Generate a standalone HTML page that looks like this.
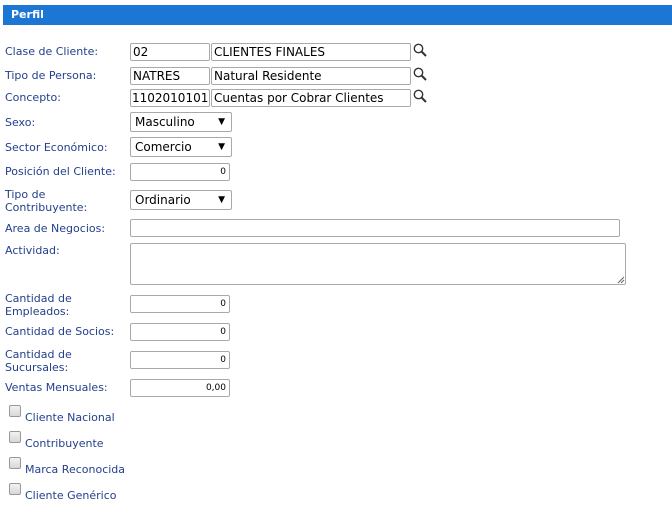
<!DOCTYPE html>
<html><head><style>
body{margin:0;width:672px;height:517px;background:#fff;position:relative;font-family:"DejaVu Sans","Liberation Sans",sans-serif;overflow:hidden}
.hd{position:absolute;left:3px;top:5px;width:669px;height:20px;background:#1c77d4;color:#fff;font-weight:bold;font-size:11px;line-height:20px;padding-left:8px;box-sizing:border-box}
.l{position:absolute;left:5px;font-size:11px;color:#23408c;line-height:13px}
.i{position:absolute;border:1px solid #a9a9a9;border-radius:2px;box-sizing:border-box;background:#fff;font-family:"DejaVu Sans",sans-serif;font-size:12px;color:#000;line-height:17px;padding:0 2px;white-space:nowrap;overflow:hidden}
.n{text-align:right;font-size:9px;line-height:17px;padding-right:3px}
.s{position:absolute;border:1px solid #a9a9a9;border-radius:2px;box-sizing:border-box;background:#fff;font-size:12px;line-height:19px;padding-left:4px}
.s:after{content:"▼";position:absolute;right:6px;top:0;font-size:9px}
.q{position:absolute;left:413px}
.c{position:absolute;left:9px;width:12px;height:12px;border:1px solid #999;border-radius:2px;box-sizing:border-box;background:linear-gradient(#f2f2f2,#d8d8d8)}
</style></head><body>
<div class="hd">Perfil</div>

<div class="l" style="top:45px">Clase de Cliente:</div>
<div class="i" style="left:130px;top:43px;width:80px;height:18px">02</div>
<div class="i" style="left:211px;top:43px;width:200px;height:18px">CLIENTES FINALES</div>
<svg class="q" style="top:43px" width="15" height="15" viewBox="0 0 15 15"><circle cx="5.5" cy="5.5" r="4.2" fill="none" stroke="#333" stroke-width="1.4"/><path d="M8.5 8.5L13 13" stroke="#333" stroke-width="2"/></svg>

<div class="l" style="top:69px">Tipo de Persona:</div>
<div class="i" style="left:130px;top:67px;width:80px;height:18px">NATRES</div>
<div class="i" style="left:211px;top:67px;width:200px;height:18px">Natural Residente</div>
<svg class="q" style="top:67px" width="15" height="15" viewBox="0 0 15 15"><circle cx="5.5" cy="5.5" r="4.2" fill="none" stroke="#333" stroke-width="1.4"/><path d="M8.5 8.5L13 13" stroke="#333" stroke-width="2"/></svg>

<div class="l" style="top:91px">Concepto:</div>
<div class="i" style="left:130px;top:89px;width:80px;height:18px;padding:0 1px">1102010101</div>
<div class="i" style="left:211px;top:89px;width:200px;height:18px">Cuentas por Cobrar Clientes</div>
<svg class="q" style="top:89px" width="15" height="15" viewBox="0 0 15 15"><circle cx="5.5" cy="5.5" r="4.2" fill="none" stroke="#333" stroke-width="1.4"/><path d="M8.5 8.5L13 13" stroke="#333" stroke-width="2"/></svg>

<div class="l" style="top:116px">Sexo:</div>
<div class="s" style="left:130px;top:112px;width:102px;height:20px">Masculino</div>

<div class="l" style="top:141px">Sector Económico:</div>
<div class="s" style="left:130px;top:137px;width:102px;height:20px">Comercio</div>

<div class="l" style="top:165px">Posición del Cliente:</div>
<div class="i n" style="left:130px;top:163px;width:100px;height:18px">0</div>

<div class="l" style="top:188px">Tipo de<br>Contribuyente:</div>
<div class="s" style="left:130px;top:190px;width:102px;height:20px">Ordinario</div>

<div class="l" style="top:222px">Area de Negocios:</div>
<div class="i" style="left:130px;top:219px;width:490px;height:18px"></div>

<div class="l" style="top:244px">Actividad:</div>
<div class="i" style="left:130px;top:243px;width:496px;height:42px"></div>
<svg style="position:absolute;left:617px;top:276px" width="8" height="8"><path d="M1 7L7 1M4 7L7 4" stroke="#666" stroke-width="1"/></svg>

<div class="l" style="top:292px">Cantidad de<br>Empleados:</div>
<div class="i n" style="left:130px;top:295px;width:100px;height:18px">0</div>

<div class="l" style="top:325px">Cantidad de Socios:</div>
<div class="i n" style="left:130px;top:323px;width:100px;height:18px">0</div>

<div class="l" style="top:348px">Cantidad de<br>Sucursales:</div>
<div class="i n" style="left:130px;top:351px;width:100px;height:18px">0</div>

<div class="l" style="top:381px">Ventas Mensuales:</div>
<div class="i n" style="left:130px;top:379px;width:100px;height:18px">0,00</div>

<div class="c" style="top:405px"></div><div class="l" style="left:25px;top:411px">Cliente Nacional</div>
<div class="c" style="top:431px"></div><div class="l" style="left:25px;top:437px">Contribuyente</div>
<div class="c" style="top:457px"></div><div class="l" style="left:25px;top:463px">Marca Reconocida</div>
<div class="c" style="top:483px"></div><div class="l" style="left:25px;top:489px">Cliente Genérico</div>
</body></html>
